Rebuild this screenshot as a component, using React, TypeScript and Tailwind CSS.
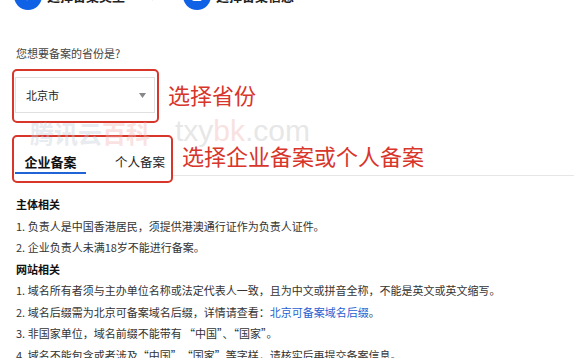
import React from 'react';

const red = 'border-[#d8352b]';

function StepBar() {
  return (
    <div className="flex items-center h-7 -mt-[18px] text-[13px] font-bold text-[#222]">
      <div className="ml-[14px] w-7 h-7 rounded-full bg-[#0f62e6] flex items-center justify-center">
        <svg width="12" height="12" viewBox="0 0 12 12">
          <path d="M2 6l3 3 5-6" stroke="white" strokeWidth="2" fill="none" />
        </svg>
      </div>
      <span className="ml-[5px]">选择备案类型</span>
      <svg className="ml-[26px]" width="6" height="10" viewBox="0 0 6 10">
        <path d="M1 1l4 4-4 4" stroke="#bbb" strokeWidth="1.2" fill="none" />
      </svg>
      <div className="ml-[26px] w-7 h-7 rounded-full bg-[#0f62e6] flex items-center justify-center">
        <div className="w-[10px] h-[10px] bg-white rounded-[2px]" />
      </div>
      <span className="ml-[5px]">选择备案信息</span>
    </div>
  );
}

function Watermark() {
  return (
    <div className="absolute left-[30px] top-[113px] flex items-end pointer-events-none select-none opacity-40">
      <span className="text-[24px] font-bold leading-[32px] text-[#c8ced8]">腾讯云</span>
      <span className="text-[24px] font-bold leading-[32px] text-[#f1b9b6]">百科</span>
      <span className="ml-[25px] text-[30px] leading-[36px] text-[#c4c4c4]" style={{ fontFamily: '"Liberation Sans", Arial, sans-serif' }}>
        txy<span className="text-[#eeb6b3]">bk</span>.com
      </span>
    </div>
  );
}

export default function App() {
  return (
    <div
      className="relative w-[574px] h-[358px] overflow-hidden bg-white text-[#333]"
      style={{ fontFamily: '"Noto Sans CJK SC", "Noto Sans", sans-serif' }}
    >
      <StepBar />

      <div className="mt-[35px] ml-[16px] text-[11px] leading-[16px] text-[#444]">您想要备案的省份是?</div>

      {/* province select */}
      <div className="mt-[8px] flex items-center">
        <div className={`ml-[12px] w-[147px] h-[54px] border-2 ${red} rounded-[5px] pt-[6px] pl-[1px]`}>
          <div className="w-[140px] h-[36px] border border-[#e0e0e0] flex items-center justify-between pl-[10px] pr-[8px]">
            <span className="text-[11px] text-[#222]">北京市</span>
            <svg width="7" height="5" viewBox="0 0 7 5">
              <path d="M0 0h7L3.5 5z" fill="#888" />
            </svg>
          </div>
        </div>
        <span className="ml-[9px] text-[22px] leading-[30px] text-[#d8352b] -mt-[4px]">选择省份</span>
      </div>

      {/* tabs */}
      <div className="mt-[12px] flex items-start">
        <div className={`ml-[12px] w-[161px] h-[48px] border-2 ${red} rounded-[5px] flex items-start`}>
          <div className="ml-[1px] w-[71px] pt-[16px] flex flex-col items-center">
            <span className="text-[13px] leading-[18px] font-bold text-[#111]">企业备案</span>
            <div className="mt-[1px] w-full h-[2px] bg-[#1f63d6]" />
          </div>
          <span className="ml-[29px] pt-[16px] text-[12.5px] leading-[18px] text-[#222]">个人备案</span>
        </div>
        <div className="flex-1 h-[41px] border-b border-[#e6e6e6] pt-[5px]">
          <span className="ml-[9px] text-[22px] leading-[30px] text-[#d8352b]">选择企业备案或个人备案</span>
        </div>
      </div>

      <div className="mt-[11px] pl-[16px] text-[11px] leading-[21.5px]">
        <div className="font-bold text-[#111]">主体相关</div>
        <div>1. 负责人是中国香港居民，须提供港澳通行证作为负责人证件。</div>
        <div>2. 企业负责人未满18岁不能进行备案。</div>
        <div className="font-bold text-[#111]">网站相关</div>
        <div>1. 域名所有者须与主办单位名称或法定代表人一致，且为中文或拼音全称，不能是英文或英文缩写。</div>
        <div>
          2. 域名后缀需为北京可备案域名后缀，详情请查看：<span className="text-[#1f5fd0]">北京可备案域名后缀</span>。
        </div>
        <div>3. 非国家单位，域名前缀不能带有 “中国”、“国家”。</div>
        <div>4. 域名不能包含或者涉及“中国”、“国家”等字样，请核实后再提交备案信息。</div>
      </div>

      <Watermark />
    </div>
  );
}
